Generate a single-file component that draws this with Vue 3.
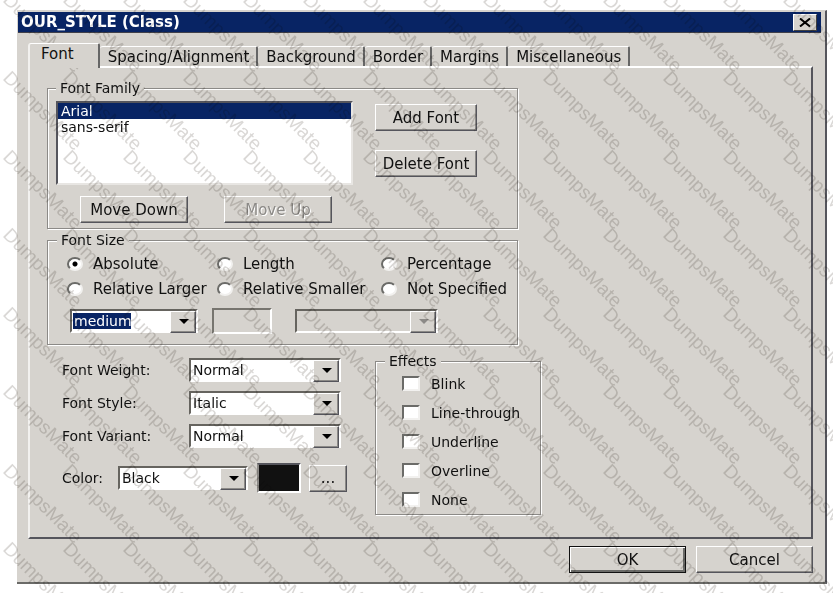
<template>
  <div class="page">
    <form class="dialog" @submit.prevent>
      <header class="title-bar">
        <h1>OUR_STYLE (Class)</h1>
        <button type="button" class="close" aria-label="Close">
          <svg width="12" height="9" viewBox="0 0 12 9">
            <path d="M1 0.5L11 8.5M11 0.5L1 8.5" stroke="#000" stroke-width="2" />
          </svg>
        </button>
      </header>

      <nav class="tabs" role="tablist">
        <button
            v-for="tab in tabs"
            :key="tab"
            type="button"
            role="tab"
            class="tab"
            :class="{ active: tab === activeTab }"
            :aria-selected="tab === activeTab"
            @click="activeTab = tab"
        >{{ tab }}</button>
      </nav>

      <section class="panel">
        <fieldset class="group family">
          <legend>Font Family</legend>
          <div class="family-top">
            <select v-model="family" class="font-list" size="5" aria-label="Font Family">
              <option v-for="font in fonts" :key="font">{{ font }}</option>
            </select>
            <div class="family-side">
              <button type="button" class="btn">Add Font</button>
              <button type="button" class="btn">Delete Font</button>
            </div>
          </div>
          <div class="family-moves">
            <button type="button" class="btn">Move Down</button>
            <button type="button" class="btn" disabled>Move Up</button>
          </div>
        </fieldset>

        <fieldset class="group size">
          <legend>Font Size</legend>
          <div class="size-modes">
            <label v-for="mode in sizeModes" :key="mode" class="radio">
              <input v-model="sizeMode" type="radio" name="size-mode" :value="mode" />
              {{ mode }}
            </label>
          </div>
          <div class="size-values">
            <span class="combo keyword">
              <select aria-label="Size keyword"><option>medium</option></select>
            </span>
            <input class="size-input" type="text" aria-label="Size value" disabled />
            <span class="combo unit disabled">
              <select aria-label="Size unit" disabled><option></option></select>
            </span>
          </div>
        </fieldset>

        <div class="lower">
          <div class="props">
            <div v-for="prop in fontProps" :key="prop.id" class="prop">
              <label :for="prop.id">{{ prop.label }}</label>
              <span class="combo">
                <select :id="prop.id"><option>{{ prop.value }}</option></select>
              </span>
            </div>
            <div class="color-row">
              <label for="color">Color:</label>
              <span class="combo">
                <select id="color"><option>Black</option></select>
              </span>
              <span class="swatch"></span>
              <button type="button" class="btn more">...</button>
            </div>
          </div>

          <fieldset class="group effects">
            <legend>Effects</legend>
            <label v-for="effect in effects" :key="effect" class="check">
              <input v-model="checked" type="checkbox" :value="effect" />
              {{ effect }}
            </label>
          </fieldset>
        </div>
      </section>

      <footer class="actions">
        <button type="submit" class="btn default">OK</button>
        <button type="button" class="btn">Cancel</button>
      </footer>
    </form>

    <svg class="watermark" aria-hidden="true">
      <text
          v-for="mark in marks"
          :key="mark.key"
          :transform="`translate(${mark.x} ${mark.y}) rotate(45)`"
      >DumpsMate</text>
    </svg>
  </div>
</template>

<script setup>
import { ref } from 'vue'

const tabs = ['Font', 'Spacing/Alignment', 'Background', 'Border', 'Margins', 'Miscellaneous']
const activeTab = ref('Font')

const fonts = ['Arial', 'sans-serif']
const family = ref('Arial')

const sizeModes = [
  'Absolute',
  'Length',
  'Percentage',
  'Relative Larger',
  'Relative Smaller',
  'Not Specified'
]
const sizeMode = ref('Absolute')

const fontProps = [
  { id: 'weight', label: 'Font Weight:', value: 'Normal' },
  { id: 'style', label: 'Font Style:', value: 'Italic' },
  { id: 'variant', label: 'Font Variant:', value: 'Normal' }
]

const effects = ['Blink', 'Line-through', 'Underline', 'Overline', 'None']
const checked = ref([])

// diagonal marks repeated over the whole page
const marks = []
for (let row = -1; row < 7; row++) {
  for (let col = 0; col < 14; col++) {
    marks.push({
      key: `${row}:${col}`,
      x: 2 + col * 60,
      y: 79 + Math.round(row * 157 / 2)
    })
  }
}
</script>

<style>
body {
  margin: 0;
  background: #fff;
}
</style>

<style scoped>
.page {
  position: relative;
  overflow: hidden;
  padding: 10px 6px 9px 17px;
  font-family: "DejaVu Sans", sans-serif;
  font-size: 14px;
  line-height: 16px;
  color: #111;
}
.page * {
  box-sizing: border-box;
}
.dialog {
  background: #d6d3ce;
  border-top: 1px solid #d6d3ce;
  border-right: 2px solid #55555c;
  border-bottom: 2px solid #6b6b68;
  padding: 1px 4px 9px 1px;
}
button,
select,
input {
  font: inherit;
  color: inherit;
  margin: 0;
  border-radius: 0;
}
.title-bar {
  display: flex;
  align-items: center;
  justify-content: space-between;
  height: 21px;
  padding: 0 4px 0 3px;
  background: #082464;
  border-bottom: 1px solid #40404a;
}
.title-bar h1 {
  margin: 0;
  font-size: 15px;
  line-height: 20px;
  font-weight: bold;
  color: #fff;
}
.close {
  display: flex;
  align-items: center;
  justify-content: center;
  width: 24px;
  height: 17px;
  padding: 0;
  background: #d6d3ce;
  border: 1px solid;
  border-color: #fff #404040 #404040 #fff;
}
.tabs {
  display: flex;
  align-items: flex-end;
  margin: 10px 10px 0;
}
.tab {
  height: 20px;
  padding: 0 7px 0 8px;
  font-size: 15px;
  background: #d6d3ce;
  border: 0;
  border-top: 1px solid #fff;
  border-right: 2px solid #666;
  border-radius: 3px 2px 0 0;
  white-space: nowrap;
}
.tab.active {
  position: relative;
  z-index: 1;
  height: 25px;
  padding: 0 24px 4px 11px;
  margin-bottom: -2px;
  border-left: 2px solid #f2f1ef;
}
.panel {
  margin: 0 8px 0 10px;
  padding: 12px 17px 22px;
  border: 2px solid;
  border-color: #fff #55555c #55555c #f2f1ef;
}
.group {
  min-width: 0;
  margin: 0;
  border: 1px solid #8c8a87;
  box-shadow: 1px 1px 0 #fff, inset 1px 1px 0 #fff;
}
.group legend {
  padding: 0 4px;
  background: #d6d3ce;
}
.btn {
  height: 27px;
  padding: 0;
  font-size: 15px;
  background: #d6d3ce;
  border: 1px solid;
  border-color: #fff #55555c #55555c #fff;
  box-shadow: inset -1px -1px 0 #8c8a87;
}
.btn:disabled {
  color: #8c8a87;
  text-shadow: 1px 1px 0 #fff;
}
.family {
  width: 471px;
  padding: 5px 8px;
}
.family-top {
  display: flex;
  gap: 22px;
}
.font-list {
  appearance: none;
  width: 297px;
  height: 84px;
  padding: 0;
  background: #fff;
  border: 2px solid;
  border-color: #55555c #e8e6e3 #e8e6e3 #55555c;
  outline: 0;
  overflow: hidden;
}
.font-list option {
  min-height: 16px;
  padding: 0 3px;
  line-height: 16px;
}
.font-list option:checked {
  background: linear-gradient(#082464, #082464);
  color: #fff;
}
.family-side {
  display: flex;
  flex-direction: column;
  gap: 19px;
  padding-top: 3px;
}
.family-side .btn {
  width: 102px;
}
.family-moves {
  display: flex;
  gap: 36px;
  padding: 11px 24px 0;
}
.family-moves .btn {
  width: 108px;
}
.size {
  width: 471px;
  margin-top: 3px;
  padding: 3px 0 10px 19px;
}
.size legend {
  margin-left: -10px;
}
.size-modes {
  display: grid;
  grid-template-columns: 150px 164px auto;
  font-size: 15px;
}
.radio {
  display: flex;
  align-items: center;
  gap: 10px;
  height: 25px;
  white-space: nowrap;
}
.radio input {
  appearance: none;
  width: 16px;
  height: 14px;
  background: #fff;
  border: 2px solid;
  border-color: #6b6b68 #f2f1ef #f2f1ef #6b6b68;
  border-radius: 50%;
}
.radio input:checked {
  background: radial-gradient(circle, #000 2px, #fff 3px);
}
.size-values {
  display: flex;
  align-items: center;
  height: 26px;
  margin-top: 7px;
  padding-left: 3px;
}
.combo {
  position: relative;
  display: block;
  height: 24px;
  background: #fff;
  border: 2px solid;
  border-color: #66645f #fff #fff #66645f;
}
.combo select {
  appearance: none;
  display: block;
  width: 100%;
  height: 20px;
  padding: 0 24px 0 2px;
  background: transparent;
  border: 0;
  outline: 0;
}
/* drop-down button and its arrow */
.combo::before {
  content: "";
  position: absolute;
  top: 0;
  right: 0;
  width: 24px;
  height: 20px;
  background: #d6d3ce;
  border: 1px solid;
  border-color: #fff #55555c #55555c #fff;
  box-shadow: inset -1px -1px 0 #8c8a87;
  pointer-events: none;
}
.combo::after {
  content: "";
  position: absolute;
  top: 8px;
  right: 7px;
  border: 5px solid transparent;
  border-top-color: #000;
  border-bottom: 0;
  pointer-events: none;
}
.combo.disabled {
  background: #d6d3ce;
}
.combo.disabled::after {
  border-top-color: #8c8a87;
}
.keyword {
  width: 128px;
}
.combo.keyword select {
  color: #fff;
  background: linear-gradient(#082464, #082464) no-repeat 1px 2px / 58px 16px;
}
.size-input {
  width: 60px;
  height: 26px;
  margin: 0 23px 0 14px;
  background: #d6d3ce;
  border: 2px solid;
  border-color: #77756f #fff #fff #77756f;
}
.unit {
  width: 143px;
}
.lower {
  display: flex;
  gap: 28px;
  margin-top: 8px;
}
.props {
  width: 300px;
  padding: 5px 0 0 15px;
}
.prop {
  display: grid;
  grid-template-columns: 127px 152px;
  align-items: center;
  margin-bottom: 9px;
}
.color-row {
  display: flex;
  align-items: center;
  margin-top: 15px;
}
.color-row label {
  width: 56px;
}
.color-row .combo {
  width: 130px;
}
.swatch {
  width: 44px;
  height: 30px;
  margin: 0 8px 0 9px;
  background: #111;
  border: 2px solid;
  border-color: #55555c #fff #fff #8c8a87;
}
.more {
  width: 38px;
}
.effects {
  width: 166px;
  padding: 0 0 0 26px;
}
.effects legend {
  margin-left: -17px;
}
.check {
  display: flex;
  align-items: center;
  gap: 11px;
  height: 29px;
}
.check input {
  appearance: none;
  width: 18px;
  height: 15px;
  background: #fff;
  border: 2px solid;
  border-color: #6b6b68 #f2f1ef #f2f1ef #6b6b68;
}
.check input:checked {
  background: #082464;
}
.actions {
  display: flex;
  justify-content: flex-end;
  gap: 10px;
  margin: 7px 8px 0 0;
}
.actions .btn {
  width: 117px;
}
.btn.default {
  border-color: #111;
  box-shadow: inset 1px 1px 0 #fff, inset -2px -2px 0 #6b6b68;
}
.watermark {
  position: absolute;
  inset: 0;
  width: 100%;
  height: 100%;
  font-family: "Liberation Sans", sans-serif;
  font-size: 19px;
  fill: #dad8d6;
  mix-blend-mode: multiply;
  pointer-events: none;
}
</style>
